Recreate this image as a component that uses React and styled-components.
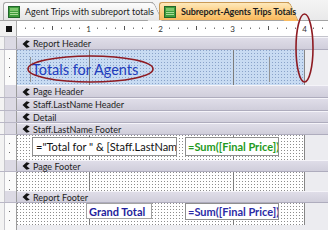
import React from "react";
import styled, { createGlobalStyle } from "styled-components";

const GlobalStyle = createGlobalStyle`
  html, body { margin: 0; padding: 0; background: #ffffff; }
  body { font-family: Lato, "Noto Sans", sans-serif; }
`;

const dots = (color, step = 3) =>
  `conic-gradient(at 1px 1px, transparent 0 270deg, ${color} 270deg 360deg) 0 0 / ${step}px ${step}px`;

const inchLines = `linear-gradient(90deg, transparent 72px, #7c7c7c 72px, #7c7c7c 73px, transparent 73px, transparent 216px, #7c7c7c 216px, #7c7c7c 217px, transparent 217px)`;

const Window = styled.div`
  position: relative;
  width: 328px;
  height: 230px;
  overflow: hidden;
  background: #ececf0;
`;

const TabBar = styled.div`
  display: flex;
  align-items: flex-end;
  height: 20px;
  padding-left: 3px;
  box-sizing: border-box;
  background: linear-gradient(#f4f4f4, #e9e9ea);
`;

const Tab = styled.div`
  position: relative;
  z-index: ${(p) => (p.$active ? 2 : 1)};
  display: flex;
  align-items: center;
  gap: 5px;
  width: ${(p) => p.$w}px;
  height: 18px;
  margin-left: ${(p) => p.$ml || 0}px;
  padding-left: 4px;
  box-sizing: border-box;
  border: 1px solid ${(p) => (p.$active ? "#c99a55" : "#a7a7a7")};
  border-right: none;
  border-bottom: none;
  border-top-left-radius: 3px;
  background: ${(p) =>
    p.$active
      ? "linear-gradient(#fee9bb, #fccd80 55%, #f9b95d)"
      : "linear-gradient(#fdfdfd, #e4e4e4)"};
  font-size: 9px;
  letter-spacing: ${(p) => (p.$active ? "-0.1px" : "0")};
  font-weight: ${(p) => (p.$active ? 700 : 400)};
  color: #1d1d1d;
  white-space: nowrap;

  &::after {
    content: "";
    position: absolute;
    top: -1px;
    left: calc(100% - 14px);
    width: 14px;
    height: 18px;
    background: inherit;
    border-top: 1px solid ${(p) => (p.$active ? "#c99a55" : "#a7a7a7")};
    border-right: 1px solid ${(p) => (p.$active ? "#c99a55" : "#a7a7a7")};
    border-top-right-radius: 4px;
    transform: skewX(25deg);
    transform-origin: top left;
    z-index: -1;
  }
`;

const TabLabel = styled.span`
  position: relative;
  z-index: 1;
`;

const ReportIcon = () => (
  <svg width="12" height="12" viewBox="0 0 12 12" style={{ position: "relative", zIndex: 1, flex: "none" }}>
    <rect x="0.5" y="0.5" width="11" height="11" fill="#3f9d3c" stroke="#21662a" />
    <rect x="2" y="2" width="8" height="3" fill="#7cc66c" />
    <rect x="2" y="6" width="8" height="1" fill="#a9dc98" />
    <rect x="2" y="8" width="8" height="1" fill="#a9dc98" />
  </svg>
);

const RulerRow = styled.div`
  display: flex;
  height: 17px;
  box-sizing: border-box;
  border-top: 1px solid #a3a3a3;
  border-bottom: 1px solid #c4c4cc;
  background: #ffffff;
`;

const Corner = styled.div`
  display: flex;
  align-items: center;
  justify-content: center;
  width: 17px;
  flex: none;
  box-sizing: border-box;
  padding-left: 1px;
  background: #f1f1f1;
  border-right: 1px solid #a9a9a9;
`;

const CornerMark = styled.div`
  width: 6px;
  height: 6px;
  background: #111111;
`;

const HRuler = () => {
  const marks = [];
  for (let i = 1; i <= 34; i++) {
    const x = i * 9 - 0.5;
    if (i % 8 === 0) {
      marks.push(
        <text key={i} x={x} y="10.5" fontSize="8" textAnchor="middle" fill="#333" fontFamily="Lato, sans-serif">
          {i / 8}
        </text>
      );
    } else if (i % 4 === 0) {
      marks.push(<line key={i} x1={x} x2={x} y1="5" y2="9" stroke="#555" strokeWidth="1" />);
    } else {
      marks.push(<line key={i} x1={x} x2={x} y1="6.5" y2="8" stroke="#777" strokeWidth="1" />);
    }
  }
  return (
    <svg width="311" height="15" style={{ display: "block" }}>
      {marks}
    </svg>
  );
};

const Row = styled.div`
  display: flex;
  height: ${(p) => p.$h}px;
`;

const Gutter = styled.div`
  width: 17px;
  flex: none;
  background: ${(p) =>
    p.$bar
      ? "linear-gradient(90deg, #f3f3f3 0 4px, #c6c6cc 4px 5px, #dcdae4 5px 16px, #9c9c9c 16px 17px)"
      : `conic-gradient(at 1px 1px, transparent 0 270deg, #6c6c6c 270deg 360deg) 9px 8px / 17px 9px, linear-gradient(90deg, #f3f3f3 0 4px, #c6c6cc 4px 5px, #fbfbfb 5px 16px, #9c9c9c 16px 17px)`};
  ${(p) => p.$bar && "border-bottom: 1px solid #b9b7c6; box-sizing: border-box;"}
`;

const Bar = styled.div`
  flex: 1;
  display: flex;
  align-items: center;
  gap: 3px;
  padding-left: 5px;
  box-sizing: border-box;
  border-top: 1px solid #f5f4f9;
  border-bottom: 1px solid #aeacbd;
  background: linear-gradient(#dfdde8, #d0cedb);
  font-size: 9px;
  color: #1e1e1e;
  white-space: nowrap;
`;

const SectionGlyph = () => (
  <svg width="8" height="8" viewBox="0 0 8 8" style={{ flex: "none" }}>
    <path d="M0.5 4 L4.5 0.3 L7.8 1.2 L4.6 4 L7.8 6.8 L4.5 7.7 Z" fill="#141414" />
  </svg>
);

const Canvas = styled.div`
  position: relative;
  display: flex;
  align-items: flex-start;
  width: 288px;
  flex: none;
  box-sizing: border-box;
  padding: ${(p) => p.$pad || "0"};
  gap: ${(p) => p.$gap || 0}px;
  border-right: 1px solid #878787;
  background: ${(p) =>
    p.$selected
      ? `${inchLines}, ${dots("#8aa3c9")}, #c8dbf2`
      : `${inchLines}, ${dots("#8c8c8c")}, #ffffff`};
`;

const Outside = styled.div`
  flex: 1;
  background: #ececf0;
`;

const TitleLabel = styled.div`
  display: flex;
  align-items: center;
  width: 240px;
  height: 25px;
  box-sizing: border-box;
  padding-left: 1px;
  border-left: 1px solid #939393;
  border-right: 1px solid #939393;
  font-size: 14.5px;
  color: #1f3dbd;
  white-space: nowrap;
`;

const Field = styled.div`
  display: flex;
  align-items: center;
  width: ${(p) => p.$w}px;
  height: ${(p) => p.$h}px;
  box-sizing: border-box;
  padding-left: ${(p) => p.$pl ?? 3}px;
  overflow: hidden;
  background: #ffffff;
  border: 1px solid ${(p) => p.$border || "#8e8e8e"};
  font-size: 11px;
  font-weight: ${(p) => (p.$bold ? 700 : 400)};
  color: ${(p) => p.$color || "#111111"};
  white-space: nowrap;
`;

const Filler = styled.div`
  flex: 1;
  display: flex;
`;

const Annotations = styled.svg`
  position: absolute;
  left: 0;
  top: 0;
  pointer-events: none;
`;

const SectionBar = ({ label, h = 12 }) => (
  <Row $h={h}>
    <Gutter $bar />
    <Bar>
      <SectionGlyph />
      {label}
    </Bar>
  </Row>
);

const SectionBody = ({ h, selected, pad, gap, children }) => (
  <Row $h={h}>
    <Gutter />
    <Canvas $selected={selected} $pad={pad} $gap={gap}>
      {children}
    </Canvas>
    <Outside />
  </Row>
);

export default function App() {
  return (
    <>
      <GlobalStyle />
      <Window>
        <TabBar>
          <Tab $w={150}>
            <ReportIcon />
            <TabLabel>Agent Trips with subreport totals</TabLabel>
          </Tab>
          <Tab $w={130} $ml={6} $active>
            <ReportIcon />
            <TabLabel>Subreport-Agents Trips Totals</TabLabel>
          </Tab>
        </TabBar>
        <RulerRow>
          <Corner>
            <CornerMark />
          </Corner>
          <HRuler />
        </RulerRow>

        <SectionBar label="Report Header" h={13} />
        <SectionBody h={35} selected pad="7px 0 0 13px">
          <TitleLabel>Totals for Agents</TitleLabel>
        </SectionBody>
        <SectionBar label="Page Header" h={13} />
        <SectionBar label="Staff.LastName Header" h={13} />
        <SectionBar label="Detail" />
        <SectionBar label="Staff.LastName Footer" />
        <SectionBody h={25} pad="2px 0 0 15px" gap={8}>
          <Field $w={145} $h={19}>="Total for " &amp; [Staff.LastName]</Field>
          <Field $w={94} $h={19} $bold $color="#1f9a22" $pl={2}>=Sum([Final Price])</Field>
        </SectionBody>
        <SectionBar label="Page Footer" />
        <SectionBody h={19} />
        <SectionBar label="Report Footer" />
        <SectionBody h={22} pad="0 0 0 69px" gap={33}>
          <Field $w={66} $h={16} $bold $color="#1e1e9c" $border="#a2a2a2" $pl={2}>Grand Total</Field>
          <Field $w={94} $h={17} $bold $color="#2b2ba6" $pl={2}>=Sum([Final Price])</Field>
        </SectionBody>
        <Row $h={10}>
          <Gutter />
          <Filler />
        </Row>

        <Annotations width="328" height="230">
          <ellipse cx="90.5" cy="69" rx="62.5" ry="13" fill="none" stroke="#8e1b22" strokeWidth="1.6" />
          <ellipse cx="304.5" cy="48" rx="8.5" ry="34" fill="none" stroke="#8e1b22" strokeWidth="1.6" />
        </Annotations>
      </Window>
    </>
  );
}
